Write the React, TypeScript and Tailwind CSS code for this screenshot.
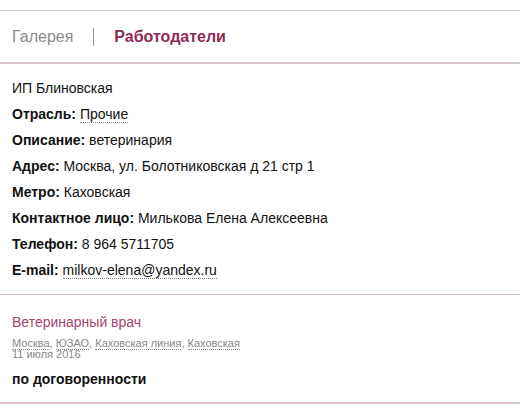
import React from 'react';

const Dotted: React.FC<{ children: React.ReactNode }> = ({ children }) => (
  <span className="border-b border-dotted border-[#888]">{children}</span>
);

const rows: { label: string; value: React.ReactNode }[] = [
  { label: 'Отрасль:', value: <Dotted>Прочие</Dotted> },
  { label: 'Описание:', value: 'ветеринария' },
  { label: 'Адрес:', value: 'Москва, ул. Болотниковская д 21 стр 1' },
  { label: 'Метро:', value: 'Каховская' },
  { label: 'Контактное лицо:', value: 'Милькова Елена Алексеевна' },
  { label: 'Телефон:', value: '8 964 5711705' },
  { label: 'E-mail:', value: <Dotted>milkov-elena@yandex.ru</Dotted> },
];

export default function App() {
  return (
    <div className="w-[520px] h-[407px] bg-white pt-[10px] text-[#111]" style={{ fontFamily: '"Liberation Sans", Arial, sans-serif' }}>
      <nav className="h-[54px] flex items-center px-3 border-t border-[#cccccc] border-b-2 border-b-[#dcc4cd] text-[16px]">
        <span className="text-[#8a8a8a]">Галерея</span>
        <span className="mx-5 w-px h-[18px] bg-[#999]" />
        <span className="font-bold text-[#8e2b58]">Работодатели</span>
      </nav>

      <section className="px-3 pt-[11px] pb-[11px] border-b border-[#dcc0cb] text-[14px] leading-[26px]">
        <div>ИП Блиновская</div>
        {rows.map((r) => (
          <div key={r.label}>
            <b>{r.label}</b> {r.value}
          </div>
        ))}
      </section>

      <section className="px-3 pt-[17px] pb-[13px] border-b-2 border-[#e2c5d1]">
        <div className="text-[14px] leading-[20px] text-[#a3446f]">Ветеринарный врач</div>
        <div className="mt-[6px] text-[11px] leading-[11px] text-[#888]">
          <Dotted>Москва</Dotted>, <Dotted>ЮЗАО</Dotted>, <Dotted>Каховская линия</Dotted>, <Dotted>Каховская</Dotted>
        </div>
        <div className="text-[11px] leading-[11px] text-[#888]">11 июля 2016</div>
        <div className="mt-[9px] text-[14px] leading-[20px] font-bold">по договоренности</div>
      </section>
    </div>
  );
}
